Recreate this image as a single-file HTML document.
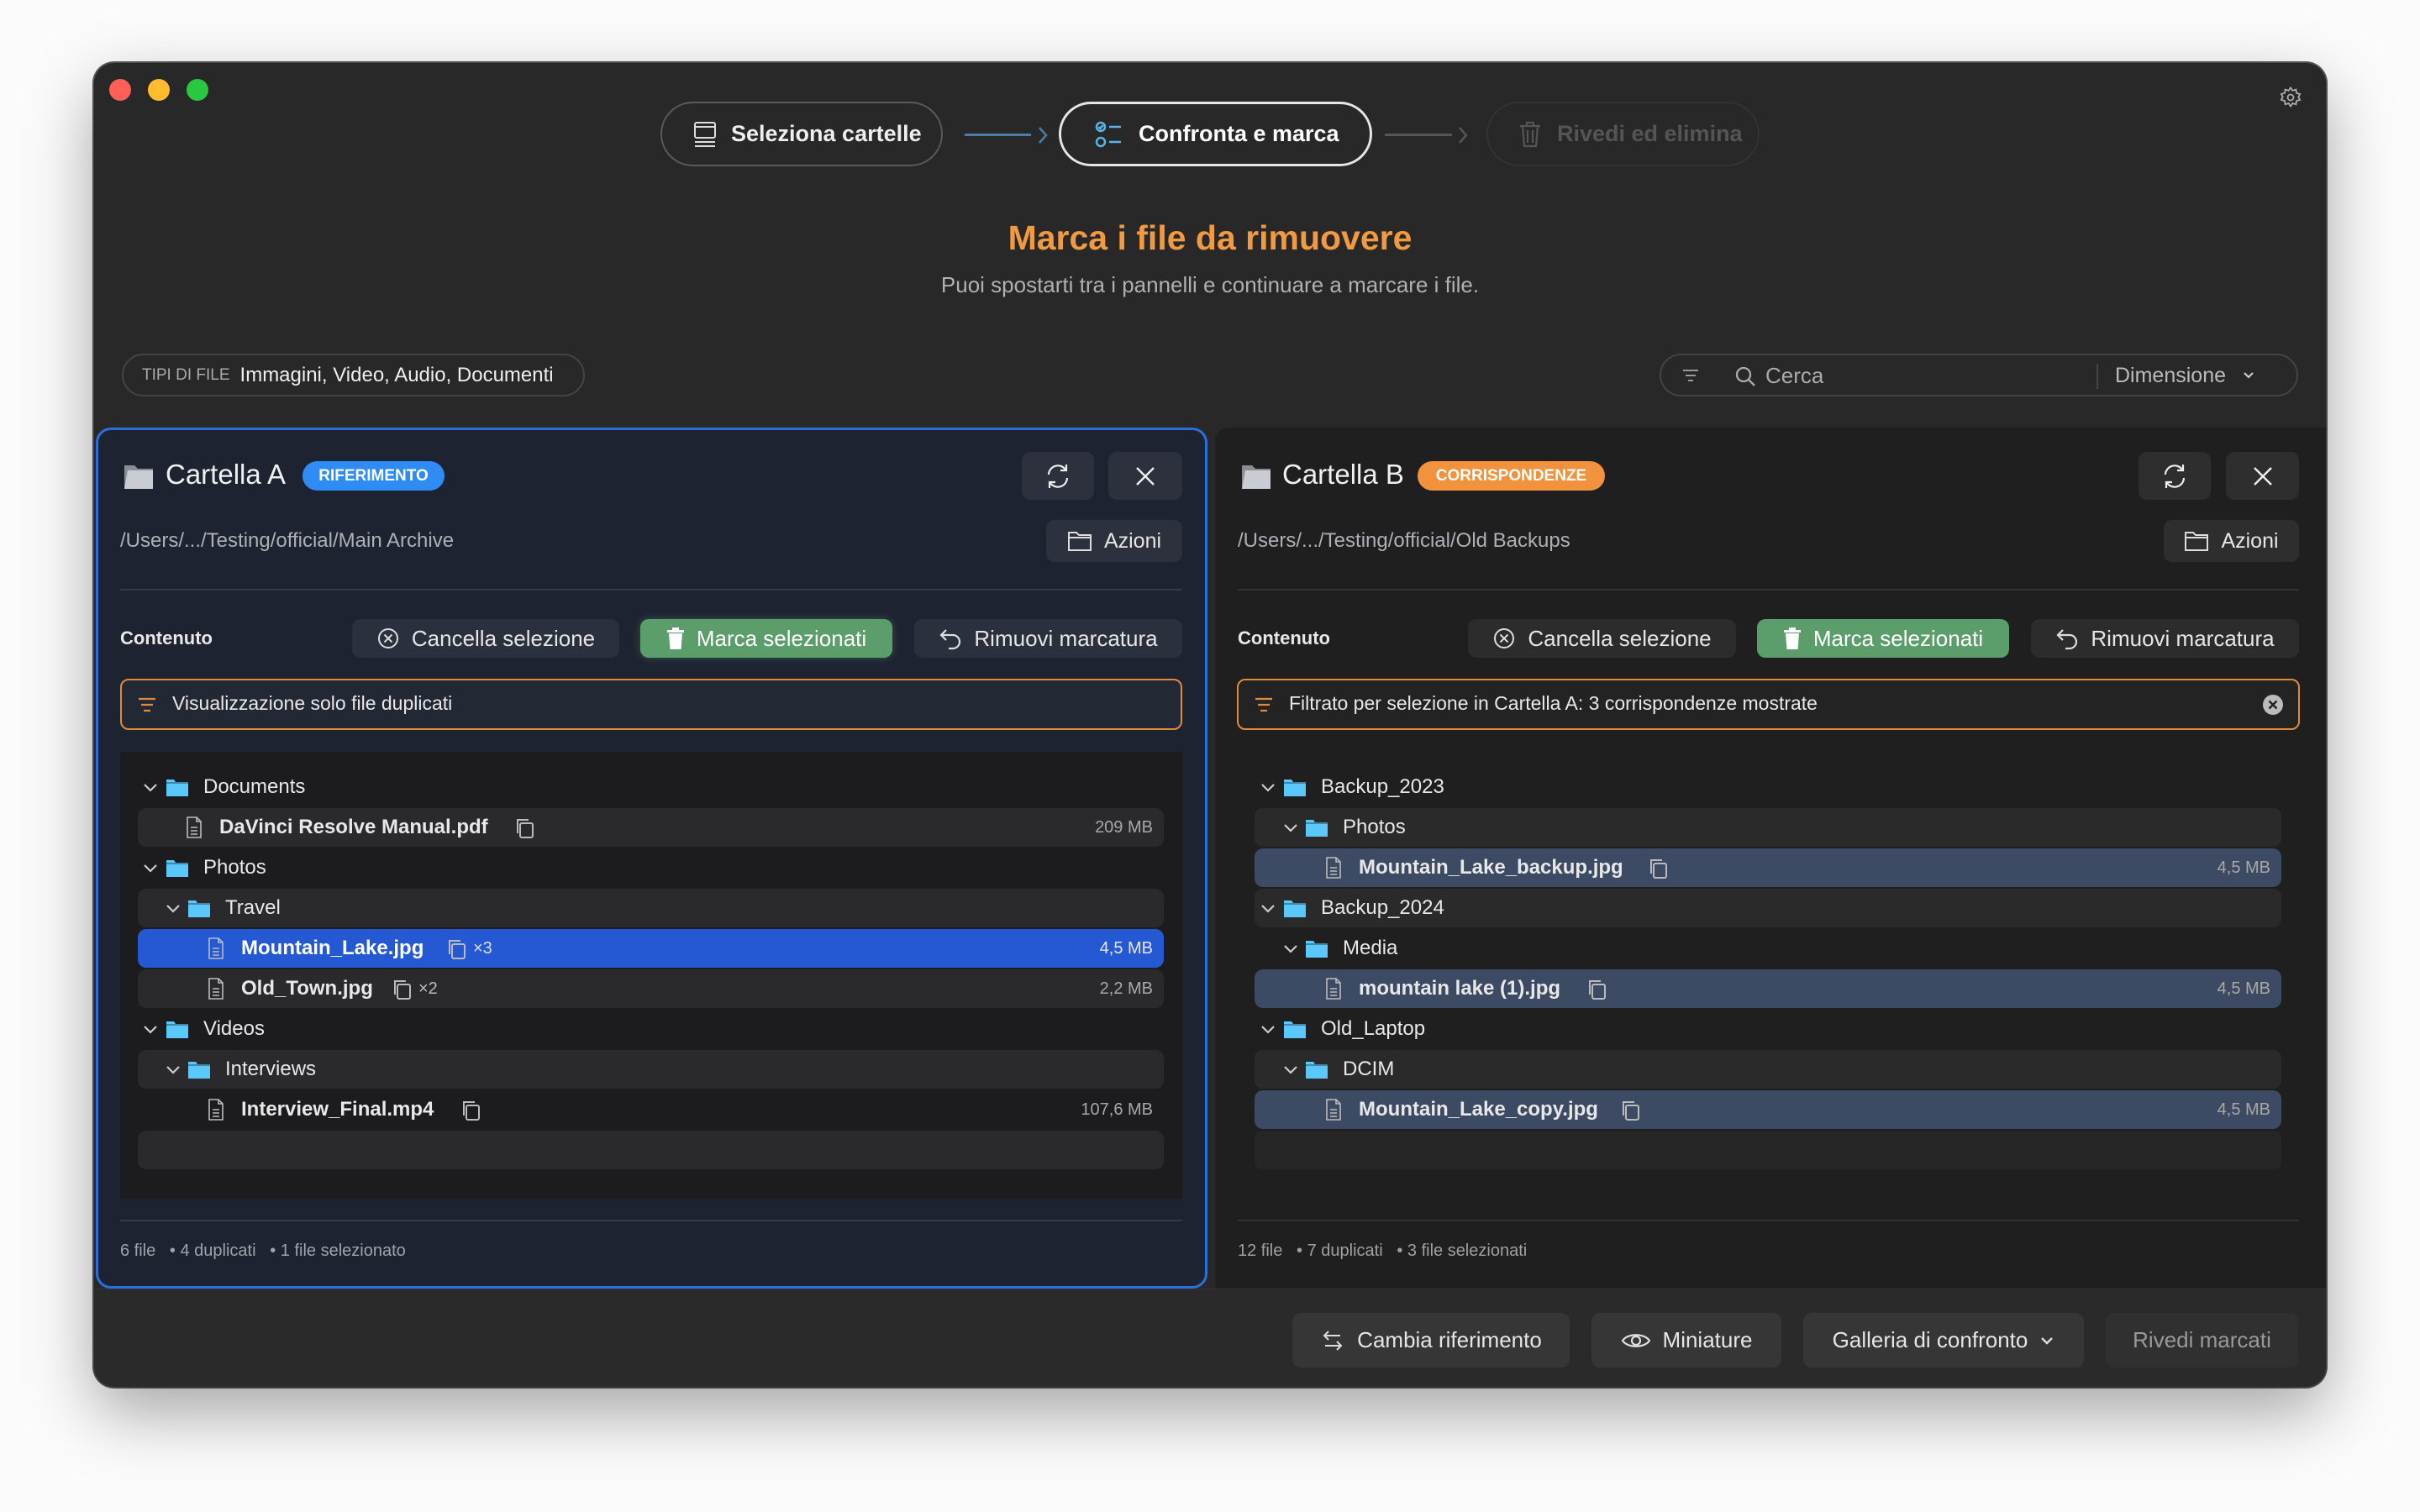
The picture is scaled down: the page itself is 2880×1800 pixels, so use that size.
<!DOCTYPE html>
<html><head><meta charset="utf-8"><style>
*{box-sizing:border-box;margin:0;padding:0}
body{width:2880px;height:1800px;background:#fbfbfb;font-family:"Liberation Sans",sans-serif;position:relative;overflow:hidden;color:#e8e8e8}
.a{position:absolute;white-space:nowrap}
.win{position:absolute;left:112px;top:75px;width:2656px;height:1576px;background:#282828;border-radius:24px;box-shadow:0 30px 80px rgba(0,0,0,.35),0 0 0 2px #555;overflow:hidden}
.pill{position:absolute;border-radius:40px;display:flex;align-items:center;font-size:27px;font-weight:bold}
.btn{position:absolute;background:#333338;border-radius:10px;display:flex;align-items:center;justify-content:center;font-size:26px;color:#e6e6e6;gap:14px}
.row{position:absolute;height:46px;border-radius:10px}
.tx{position:absolute;white-space:nowrap;font-size:24px;line-height:48px;color:#e8e8e8}
.b{font-weight:bold}
.sz{position:absolute;font-size:20px;line-height:48px;color:#a8a8a8;text-align:right;width:200px}
</style></head><body>
<div class="win">
<div class="a" style="left:18px;top:19px;width:26px;height:26px;border-radius:50%;background:#fe5f57"></div>
<div class="a" style="left:64px;top:19px;width:26px;height:26px;border-radius:50%;background:#febc2e"></div>
<div class="a" style="left:110px;top:19px;width:26px;height:26px;border-radius:50%;background:#28c840"></div>
<svg class="a" style="left:2600px;top:27px" width="28" height="28" viewBox="0 0 24 24" fill="none" stroke="#aaa" stroke-width="1.6"><circle cx="12" cy="12" r="3"/><path d="M12 2l2 3 3.5-1 .5 3.5 3.5 1-1.5 3 1.5 3-3.5 1-.5 3.5-3.5-1-2 3-2-3-3.5 1-.5-3.5-3.5-1 1.5-3-1.5-3 3.5-1 .5-3.5 3.5 1z"/></svg>

<div class="pill" style="left:674px;top:46px;width:336px;height:77px;border:2.5px solid #5a5a5a;padding-left:36px;gap:16px;color:#eee">
<svg width="30" height="34" viewBox="0 0 30 34" fill="none" stroke="#ddd" stroke-width="2"><rect x="3" y="3" width="24" height="18" rx="2"/><path d="M3 8h24M3 26h24M3 31h24"/></svg>Seleziona cartelle</div>
<div class="a" style="left:1036px;top:84px;width:79px;height:3px;background:#4a7ea8"></div>
<svg class="a" style="left:1122px;top:74px" width="14" height="24" viewBox="0 0 14 24" fill="none" stroke="#4a7ea8" stroke-width="2.5"><path d="M3 3l8 9-8 9"/></svg>
<div class="pill" style="left:1148px;top:46px;width:373px;height:77px;border:3px solid #e6e6e6;padding-left:40px;gap:18px;color:#fff">
<svg width="34" height="34" viewBox="0 0 34 34" fill="none" stroke="#5ab4e6" stroke-width="2.5"><circle cx="7" cy="8" r="5"/><path d="M4.5 8l2 2 3-4"/><circle cx="7" cy="26" r="5"/><path d="M17 8h14M17 26h14"/></svg>Confronta e marca</div>
<div class="a" style="left:1536px;top:84px;width:80px;height:3px;background:#555"></div>
<svg class="a" style="left:1622px;top:74px" width="14" height="24" viewBox="0 0 14 24" fill="none" stroke="#555" stroke-width="2.5"><path d="M3 3l8 9-8 9"/></svg>
<div class="pill" style="left:1657px;top:46px;width:325px;height:77px;border:2px solid #333;padding-left:36px;gap:18px;color:#555">
<svg width="28" height="34" viewBox="0 0 28 34" fill="none" stroke="#555" stroke-width="2.2"><path d="M2 7h24M10 7V3h8v4M5 7l2 24h14l2-24M11 12v15M17 12v15"/></svg>Rivedi ed elimina</div>

<div class="a" style="left:0;width:2656px;top:185px;text-align:center;font-size:41px;font-weight:bold;color:#f29a42">Marca i file da rimuovere</div>
<div class="a" style="left:0;width:2656px;top:249px;text-align:center;font-size:26px;color:#b0b0b0">Puoi spostarti tra i pannelli e continuare a marcare i file.</div>

<div class="pill" style="left:33px;top:346px;width:551px;height:51px;border:2px solid #444;padding-left:22px;font-weight:normal;gap:12px"><span style="font-size:19px;color:#aaa">TIPI DI FILE</span><span style="font-size:24px;color:#eee">Immagini, Video, Audio, Documenti</span></div>
<div class="pill" style="left:1863px;top:346px;width:760px;height:51px;border:2px solid #444;font-weight:normal">
<svg class="a" style="left:24px;top:15px" width="22" height="18" viewBox="0 0 22 18" stroke="#999" stroke-width="2"><path d="M2 3h18M5 9h12M8 15h6"/></svg>
<svg class="a" style="left:86px;top:11px" width="28" height="28" viewBox="0 0 28 28" fill="none" stroke="#aaa" stroke-width="2.3"><circle cx="12" cy="12" r="8"/><path d="M18 18l7 7"/></svg>
<span class="a" style="left:124px;top:9px;font-size:26px;color:#aaa">Cerca</span>
<div class="a" style="left:518px;top:10px;width:2px;height:30px;background:#444"></div>
<span class="a" style="left:540px;top:10px;font-size:25px;color:#bbb">Dimensione</span>
<svg class="a" style="left:692px;top:18px" width="14" height="12" viewBox="0 0 14 12" fill="none" stroke="#ccc" stroke-width="2.2"><path d="M2 3l5 5 5-5"/></svg>
</div>

<div class="a" style="left:2px;top:434px;width:1323px;height:1025px;background:#1e2331;border:3.5px solid #2a6ee0;border-radius:18px"></div>
<div class="a" style="left:1334px;top:434px;width:1322px;height:1025px;background:#1f1f1f;border-radius:16px 0 0 0"></div>
<div class="a" style="left:0;top:1459px;width:2656px;height:117px;background:#2a2a2a;border-top:1px solid #333"></div>
<div class="btn" style="left:1426px;top:1488px;width:330px;height:65px;background:#363636"><svg width="30" height="30" viewBox="0 0 30 30" fill="none" stroke="#ddd" stroke-width="2"><path d="M24 9H5M10 4L5 9l5 5M6 21h19M20 16l5 5-5 5"/></svg>Cambia riferimento</div>
<div class="btn" style="left:1782px;top:1488px;width:226px;height:65px;background:#363636"><svg width="36" height="24" viewBox="0 0 36 24" fill="none" stroke="#ddd" stroke-width="2.2"><path d="M2 12C8 3 28 3 34 12 28 21 8 21 2 12z"/><circle cx="18" cy="12" r="5"/></svg>Miniature</div>
<div class="btn" style="left:2034px;top:1488px;width:334px;height:65px;background:#363636">Galleria di confronto<svg width="18" height="14" viewBox="0 0 18 14" fill="none" stroke="#ddd" stroke-width="2.4"><path d="M3 4l6 6 6-6"/></svg></div>
<div class="btn" style="left:2394px;top:1488px;width:229px;height:65px;background:#303030;color:#999">Rivedi marcati</div>
</div>

<svg class="a" style="left:146px;top:548px" width="38" height="36" viewBox="0 0 38 36"><path d="M2 6h12l4 4h18v24H2z" fill="#8a8d94"/><path d="M6 12h30v22H2z" fill="#c9ccd2"/></svg>
<div class="a" style="left:197px;top:546px;font-size:33px;color:#f0f0f0">Cartella A</div>
<div class="a" style="left:360px;top:549px;width:169px;height:35px;border-radius:18px;background:#2f8cf5;color:#fff;font-size:19px;font-weight:bold;text-align:center;line-height:35px">RIFERIMENTO</div>
<div class="btn" style="left:1216px;top:538px;width:86px;height:57px;background:#2c313d"><svg width="34" height="34" viewBox="0 0 34 34" fill="none" stroke="#eee" stroke-width="2.2"><path d="M6 15a11 11 0 0 1 20-6M28 19a11 11 0 0 1-20 6"/><path d="M27 3v7h-7M7 31v-7h7"/></svg></div>
<div class="btn" style="left:1319px;top:538px;width:88px;height:57px;background:#2c313d"><svg width="26" height="26" viewBox="0 0 26 26" stroke="#eee" stroke-width="2.4"><path d="M3 3l20 20M23 3L3 23"/></svg></div>
<div class="a" style="left:143px;top:630px;font-size:24px;color:#aeb0b6">/Users/.../Testing/official/Main Archive</div>
<div class="btn" style="left:1245px;top:619px;width:162px;height:50px;background:#2c313d;font-size:25px"><svg width="30" height="26" viewBox="0 0 30 26" fill="none" stroke="#ddd" stroke-width="2"><path d="M2 3h9l3 3h14v18H2zM2 9h26"/></svg>Azioni</div>
<div class="a" style="left:143px;top:701px;width:1264px;height:2px;background:#343a48"></div>
<div class="a" style="left:143px;top:747px;font-size:22px;font-weight:bold;color:#e8e8e8">Contenuto</div>
<div class="btn" style="left:419px;top:737px;width:318px;height:46px;background:#2a303d"><svg width="28" height="28" viewBox="0 0 28 28" fill="none" stroke="#ddd" stroke-width="2"><circle cx="14" cy="14" r="11"/><path d="M9.5 9.5l9 9M18.5 9.5l-9 9"/></svg>Cancella selezione</div>
<div class="btn" style="left:762px;top:737px;width:300px;height:46px;background:#5b9e6b;color:#fff;box-shadow:0 0 10px rgba(91,158,107,.4)"><svg width="22" height="28" viewBox="0 0 22 28" fill="#fff"><path d="M1 4h20v3H1zM7 1h8v3H7zM3 8h16l-1.5 19h-13z"/></svg>Marca selezionati</div>
<div class="btn" style="left:1088px;top:737px;width:319px;height:46px;background:#2a303d"><svg width="28" height="28" viewBox="0 0 28 28" fill="none" stroke="#ddd" stroke-width="2.2"><path d="M9 4L3 10l6 6M3 10h14a8 8 0 0 1 0 16h-5"/></svg>Rimuovi marcatura</div>
<div class="a" style="left:143px;top:808px;width:1264px;height:61px;border:2.5px solid #e08a3c;border-radius:10px;background:#232835"></div>
<svg class="a" style="left:163px;top:829px" width="24" height="20" viewBox="0 0 24 20" stroke="#e08a3c" stroke-width="2.2"><path d="M2 3h20M5 10h14M8 17h8"/></svg>
<div class="a" style="left:205px;top:824px;font-size:23px;color:#e8e8e8">Visualizzazione solo file duplicati</div>
<div class="a" style="left:143px;top:895px;width:1264px;height:532px;background:#1c1c1e"></div>
<div class="a" style="left:143px;top:1452px;width:1264px;height:2px;background:#343a48"></div>
<div class="a" style="left:143px;top:1478px;font-size:20px;color:#a0a3aa">6 file &nbsp;&nbsp;• 4 duplicati &nbsp;&nbsp;• 1 file selezionato</div>

<svg class="a" style="left:1476px;top:548px" width="38" height="36" viewBox="0 0 38 36"><path d="M2 6h12l4 4h18v24H2z" fill="#8a8d94"/><path d="M6 12h30v22H2z" fill="#c9ccd2"/></svg>
<div class="a" style="left:1526px;top:546px;font-size:33px;color:#f0f0f0">Cartella B</div>
<div class="a" style="left:1687px;top:549px;width:223px;height:35px;border-radius:18px;background:#f2923d;color:#fff;font-size:19px;font-weight:bold;text-align:center;line-height:35px">CORRISPONDENZE</div>
<div class="btn" style="left:2545px;top:538px;width:86px;height:57px;background:#2e2e2e"><svg width="34" height="34" viewBox="0 0 34 34" fill="none" stroke="#eee" stroke-width="2.2"><path d="M6 15a11 11 0 0 1 20-6M28 19a11 11 0 0 1-20 6"/><path d="M27 3v7h-7M7 31v-7h7"/></svg></div>
<div class="btn" style="left:2649px;top:538px;width:87px;height:57px;background:#2e2e2e"><svg width="26" height="26" viewBox="0 0 26 26" stroke="#eee" stroke-width="2.4"><path d="M3 3l20 20M23 3L3 23"/></svg></div>
<div class="a" style="left:1473px;top:630px;font-size:24px;color:#aeb0b6">/Users/.../Testing/official/Old Backups</div>
<div class="btn" style="left:2575px;top:619px;width:161px;height:50px;background:#2e2e2e;font-size:25px"><svg width="30" height="26" viewBox="0 0 30 26" fill="none" stroke="#ddd" stroke-width="2"><path d="M2 3h9l3 3h14v18H2zM2 9h26"/></svg>Azioni</div>
<div class="a" style="left:1473px;top:701px;width:1263px;height:2px;background:#333"></div>
<div class="a" style="left:1473px;top:747px;font-size:22px;font-weight:bold;color:#e8e8e8">Contenuto</div>
<div class="btn" style="left:1747px;top:737px;width:319px;height:46px;background:#2c2c2c"><svg width="28" height="28" viewBox="0 0 28 28" fill="none" stroke="#ddd" stroke-width="2"><circle cx="14" cy="14" r="11"/><path d="M9.5 9.5l9 9M18.5 9.5l-9 9"/></svg>Cancella selezione</div>
<div class="btn" style="left:2091px;top:737px;width:300px;height:46px;background:#5b9e6b;color:#fff"><svg width="22" height="28" viewBox="0 0 22 28" fill="#fff"><path d="M1 4h20v3H1zM7 1h8v3H7zM3 8h16l-1.5 19h-13z"/></svg>Marca selezionati</div>
<div class="btn" style="left:2417px;top:737px;width:319px;height:46px;background:#2c2c2c"><svg width="28" height="28" viewBox="0 0 28 28" fill="none" stroke="#ddd" stroke-width="2.2"><path d="M9 4L3 10l6 6M3 10h14a8 8 0 0 1 0 16h-5"/></svg>Rimuovi marcatura</div>
<div class="a" style="left:1472px;top:808px;width:1265px;height:61px;border:2.5px solid #e08a3c;border-radius:10px;background:#232323"></div>
<svg class="a" style="left:1492px;top:829px" width="24" height="20" viewBox="0 0 24 20" stroke="#e08a3c" stroke-width="2.2"><path d="M2 3h20M5 10h14M8 17h8"/></svg>
<div class="a" style="left:1534px;top:824px;font-size:23px;color:#e8e8e8">Filtrato per selezione in Cartella A: 3 corrispondenze mostrate</div>
<svg class="a" style="left:2692px;top:826px" width="26" height="26" viewBox="0 0 26 26"><circle cx="13" cy="13" r="12" fill="#bbb"/><path d="M8.5 8.5l9 9M17.5 8.5l-9 9" stroke="#222" stroke-width="2.4"/></svg>
<div class="a" style="left:1473px;top:1452px;width:1263px;height:2px;background:#333"></div>
<div class="a" style="left:1473px;top:1478px;font-size:20px;color:#a0a0a0">12 file &nbsp;&nbsp;• 7 duplicati &nbsp;&nbsp;• 3 file selezionati</div>

<svg width="0" height="0" style="position:absolute"><defs>
<symbol id="fo" viewBox="0 0 28 24"><path d="M1 3h9l2 3h15v17H1z" fill="#5ac8fa"/><path d="M1 7h26" stroke="#1c1c1e" stroke-width="1.5" opacity=".5"/></symbol>
<symbol id="ch" viewBox="0 0 18 12"><path d="M2 2l7 7 7-7" fill="none" stroke="#ccc" stroke-width="2.2"/></symbol>
<symbol id="fi" viewBox="0 0 20 26"><path d="M2 1h11l5 5v19H2zM13 1v5h5M6 13h8M6 17h8M6 21h8" fill="none" stroke="#bbb" stroke-width="1.6"/></symbol>
<symbol id="cp" viewBox="0 0 24 26"><rect x="7" y="7" width="15" height="17" rx="2" fill="none" stroke="#bbb" stroke-width="2"/><path d="M4 19V3h13" fill="none" stroke="#bbb" stroke-width="2"/></symbol>
</defs></svg>

<div class="row" style="left:164px;top:962px;width:1221px;background:#2a2a2c"></div>
<div class="row" style="left:164px;top:1058px;width:1221px;background:#2a2a2c"></div>
<div class="row" style="left:164px;top:1106px;width:1221px;background:#2559d4"></div>
<div class="row" style="left:164px;top:1154px;width:1221px;background:#2a2a2c"></div>
<div class="row" style="left:164px;top:1250px;width:1221px;background:#2a2a2c"></div>
<div class="row" style="left:164px;top:1346px;width:1221px;background:#2a2a2c"></div>

<svg class="a" style="left:170px;top:932px" width="18" height="12"><use href="#ch"/></svg><svg class="a" style="left:197px;top:925px" width="28" height="24"><use href="#fo"/></svg><div class="tx" style="left:242px;top:913px">Documents</div>
<svg class="a" style="left:221px;top:972px" width="20" height="26"><use href="#fi"/></svg><div class="tx b" style="left:261px;top:961px">DaVinci Resolve Manual.pdf</div><svg class="a" style="left:612px;top:973px" width="24" height="26"><use href="#cp"/></svg><div class="sz" style="left:1172px;top:961px">209 MB</div>
<svg class="a" style="left:170px;top:1028px" width="18" height="12"><use href="#ch"/></svg><svg class="a" style="left:197px;top:1021px" width="28" height="24"><use href="#fo"/></svg><div class="tx" style="left:242px;top:1009px">Photos</div>
<svg class="a" style="left:197px;top:1076px" width="18" height="12"><use href="#ch"/></svg><svg class="a" style="left:223px;top:1069px" width="28" height="24"><use href="#fo"/></svg><div class="tx" style="left:268px;top:1057px">Travel</div>
<svg class="a" style="left:247px;top:1116px" width="20" height="26"><use href="#fi"/></svg><div class="tx b" style="left:287px;top:1105px;color:#fff">Mountain_Lake.jpg</div><svg class="a" style="left:531px;top:1117px" width="24" height="26"><use href="#cp"/></svg><div class="tx" style="left:563px;top:1105px;font-size:20px;color:#ddd">×3</div><div class="sz" style="left:1172px;top:1105px;color:#e6e6e6">4,5 MB</div>
<svg class="a" style="left:247px;top:1164px" width="20" height="26"><use href="#fi"/></svg><div class="tx b" style="left:287px;top:1153px">Old_Town.jpg</div><svg class="a" style="left:466px;top:1165px" width="24" height="26"><use href="#cp"/></svg><div class="tx" style="left:498px;top:1153px;font-size:20px;color:#bbb">×2</div><div class="sz" style="left:1172px;top:1153px">2,2 MB</div>
<svg class="a" style="left:170px;top:1220px" width="18" height="12"><use href="#ch"/></svg><svg class="a" style="left:197px;top:1213px" width="28" height="24"><use href="#fo"/></svg><div class="tx" style="left:242px;top:1201px">Videos</div>
<svg class="a" style="left:197px;top:1268px" width="18" height="12"><use href="#ch"/></svg><svg class="a" style="left:223px;top:1261px" width="28" height="24"><use href="#fo"/></svg><div class="tx" style="left:268px;top:1249px">Interviews</div>
<svg class="a" style="left:247px;top:1308px" width="20" height="26"><use href="#fi"/></svg><div class="tx b" style="left:287px;top:1297px">Interview_Final.mp4</div><svg class="a" style="left:548px;top:1309px" width="24" height="26"><use href="#cp"/></svg><div class="sz" style="left:1172px;top:1297px">107,6 MB</div>

<div class="row" style="left:1493px;top:962px;width:1222px;background:#2a2a2a"></div>
<div class="row" style="left:1493px;top:1010px;width:1222px;background:#3c4a63"></div>
<div class="row" style="left:1493px;top:1058px;width:1222px;background:#2a2a2a"></div>
<div class="row" style="left:1493px;top:1154px;width:1222px;background:#3c4a63"></div>
<div class="row" style="left:1493px;top:1250px;width:1222px;background:#2a2a2a"></div>
<div class="row" style="left:1493px;top:1298px;width:1222px;background:#3c4a63"></div>
<div class="row" style="left:1493px;top:1346px;width:1222px;background:#262626"></div>

<svg class="a" style="left:1500px;top:932px" width="18" height="12"><use href="#ch"/></svg><svg class="a" style="left:1527px;top:925px" width="28" height="24"><use href="#fo"/></svg><div class="tx" style="left:1572px;top:913px">Backup_2023</div>
<svg class="a" style="left:1527px;top:980px" width="18" height="12"><use href="#ch"/></svg><svg class="a" style="left:1553px;top:973px" width="28" height="24"><use href="#fo"/></svg><div class="tx" style="left:1598px;top:961px">Photos</div>
<svg class="a" style="left:1577px;top:1020px" width="20" height="26"><use href="#fi"/></svg><div class="tx b" style="left:1617px;top:1009px">Mountain_Lake_backup.jpg</div><svg class="a" style="left:1961px;top:1021px" width="24" height="26"><use href="#cp"/></svg><div class="sz" style="left:2502px;top:1009px">4,5 MB</div>
<svg class="a" style="left:1500px;top:1076px" width="18" height="12"><use href="#ch"/></svg><svg class="a" style="left:1527px;top:1069px" width="28" height="24"><use href="#fo"/></svg><div class="tx" style="left:1572px;top:1057px">Backup_2024</div>
<svg class="a" style="left:1527px;top:1124px" width="18" height="12"><use href="#ch"/></svg><svg class="a" style="left:1553px;top:1117px" width="28" height="24"><use href="#fo"/></svg><div class="tx" style="left:1598px;top:1105px">Media</div>
<svg class="a" style="left:1577px;top:1164px" width="20" height="26"><use href="#fi"/></svg><div class="tx b" style="left:1617px;top:1153px">mountain lake (1).jpg</div><svg class="a" style="left:1888px;top:1165px" width="24" height="26"><use href="#cp"/></svg><div class="sz" style="left:2502px;top:1153px">4,5 MB</div>
<svg class="a" style="left:1500px;top:1220px" width="18" height="12"><use href="#ch"/></svg><svg class="a" style="left:1527px;top:1213px" width="28" height="24"><use href="#fo"/></svg><div class="tx" style="left:1572px;top:1201px">Old_Laptop</div>
<svg class="a" style="left:1527px;top:1268px" width="18" height="12"><use href="#ch"/></svg><svg class="a" style="left:1553px;top:1261px" width="28" height="24"><use href="#fo"/></svg><div class="tx" style="left:1598px;top:1249px">DCIM</div>
<svg class="a" style="left:1577px;top:1308px" width="20" height="26"><use href="#fi"/></svg><div class="tx b" style="left:1617px;top:1297px">Mountain_Lake_copy.jpg</div><svg class="a" style="left:1928px;top:1309px" width="24" height="26"><use href="#cp"/></svg><div class="sz" style="left:2502px;top:1297px">4,5 MB</div>
</body></html>
